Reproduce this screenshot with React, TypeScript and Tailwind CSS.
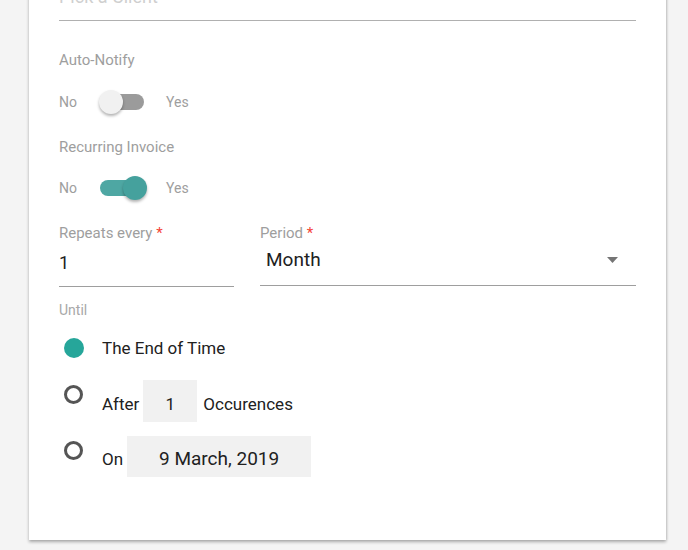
import { useState } from "react";

function Toggle({ on, onChange }: { on: boolean; onChange: () => void }) {
  return (
    <div className="flex items-center h-[24px] text-[14px] text-[#9e9e9e]">
      <span className="w-[17px]">No</span>
      <button
        type="button"
        onClick={onChange}
        className="relative ml-[23px] w-[48px] h-[24px] shrink-0"
      >
        <span
          className={
            on
              ? "absolute left-[1px] top-[4px] w-[44px] h-[16px] rounded-full bg-[#4ea7a3]"
              : "absolute left-[1px] top-[4px] w-[44px] h-[16px] rounded-full bg-[#9b9b9b]"
          }
        />
        <span
          className={
            on
              ? "absolute top-0 left-[24px] w-[24px] h-[24px] rounded-full bg-[#45a19d] shadow-[0_2px_3px_rgba(0,0,0,0.3)]"
              : "absolute top-0 left-0 w-[24px] h-[24px] rounded-full bg-[#f1f1f1] shadow-[0_2px_3px_rgba(0,0,0,0.3)]"
          }
        />
      </button>
      <span className="ml-[19px]">Yes</span>
    </div>
  );
}

function Radio({ checked }: { checked: boolean }) {
  return checked ? (
    <span className="block w-[20px] h-[20px] rounded-full bg-[#26a69a]" />
  ) : (
    <span className="block w-[19px] h-[19px] rounded-full border-[3px] border-[#555555]" />
  );
}

export default function App() {
  const [notify, setNotify] = useState(false);
  const [recurring, setRecurring] = useState(true);

  return (
    <div className="min-h-screen bg-[#f4f4f4] font-['Roboto',sans-serif] overflow-hidden">
      <div className="ml-[29px] w-[637px] -mt-[15px] bg-white px-[30px] pb-[63px] shadow-[0_2px_3px_rgba(0,0,0,0.3),1px_0_2px_rgba(0,0,0,0.08)]">
        {/* client picker */}
        <div className="border-b border-[#b0b0b0] pb-[11px]">
          <div className="h-[24px] leading-[24px] text-[18px] text-[#cfcfcf]">Pick a Client</div>
        </div>

        <div className="mt-[29px] h-[20px] leading-[20px] text-[15px] text-[#9e9e9e]">Auto-Notify</div>
        <div className="mt-[20px]">
          <Toggle on={notify} onChange={() => setNotify(!notify)} />
        </div>

        <div className="mt-[23px] h-[20px] leading-[20px] text-[15px] text-[#9e9e9e]">Recurring Invoice</div>
        <div className="mt-[19px]">
          <Toggle on={recurring} onChange={() => setRecurring(!recurring)} />
        </div>

        <div className="mt-[23px] flex gap-[26px]">
          <div className="w-[175px]">
            <div className="h-[20px] leading-[20px] text-[15px] text-[#9e9e9e]">
              Repeats every <span className="text-[#f44336]">*</span>
            </div>
            <div className="mt-[8px] border-b border-[#9e9e9e] pb-[11px] h-[36px]">
              <div className="h-[24px] leading-[24px] text-[18px] text-[#212121]">1</div>
            </div>
          </div>
          <div className="flex-1">
            <div className="h-[20px] leading-[20px] text-[15px] text-[#9e9e9e]">
              Period <span className="text-[#f44336]">*</span>
            </div>
            <div className="mt-[5px] border-b border-[#9e9e9e] h-[38px] flex items-start justify-between pl-[6px] pr-[18px]">
              <div className="h-[24px] leading-[24px] text-[19px] text-[#212121]">Month</div>
              <svg width="11" height="6" viewBox="0 0 11 6" className="mt-[9px]">
                <path d="M0 0h11L5.5 6z" fill="#757575" />
              </svg>
            </div>
          </div>
        </div>

        <div className="mt-[13px] h-[20px] leading-[20px] text-[14px] text-[#a8a8a8]">Until</div>

        <div className="mt-[16px] flex items-center h-[24px] pl-[5px]">
          <Radio checked />
          <span className="ml-[18px] leading-[24px] text-[17px] text-[#212121]">The End of Time</span>
        </div>

        <div className="mt-[20px] flex items-start pl-[5px]">
          <span className="mt-[5px]">
            <Radio checked={false} />
          </span>
          <div className="ml-[19px] flex items-end text-[17px] text-[#212121]">
            <span className="leading-[24px] mb-[6px]">After</span>
            <div className="ml-[4px] w-[54px] h-[42px] bg-[#f1f1f1] flex items-end justify-center">
              <span className="leading-[24px] mb-[6px]">1</span>
            </div>
            <span className="ml-[6px] leading-[24px] mb-[6px]">Occurences</span>
          </div>
        </div>

        <div className="mt-[14px] flex items-start pl-[5px]">
          <span className="mt-[5px]">
            <Radio checked={false} />
          </span>
          <div className="ml-[19px] flex items-end text-[17px] text-[#212121]">
            <span className="leading-[24px] mb-[6px]">On</span>
            <div className="ml-[4px] w-[184px] h-[41px] bg-[#f1f1f1] flex items-end justify-center">
              <span className="leading-[24px] mb-[6px] text-[19px]">9 March, 2019</span>
            </div>
          </div>
        </div>
      </div>
    </div>
  );
}
